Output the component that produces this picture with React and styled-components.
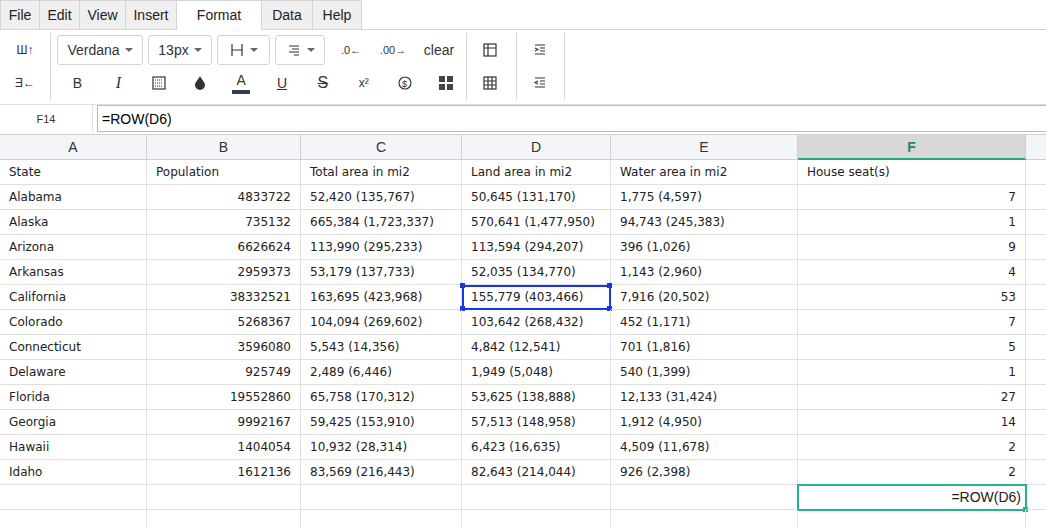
import React from 'react'
import styled, { createGlobalStyle } from 'styled-components'

const Global = createGlobalStyle`
  body { margin: 0; font-family: "Liberation Sans", Arial, sans-serif; background: #fff; overflow: hidden; }
`

const Menu = styled.div`
  display: flex;
  height: 30px;
  border-bottom: 1px solid #d4d4d4;
  box-sizing: border-box;
`
const Tab = styled.div`
  width: ${p => p.w}px;
  box-sizing: border-box;
  display: flex;
  align-items: center;
  justify-content: center;
  font-size: 14px;
  color: #222;
  background: ${p => (p.active ? '#fff' : '#efefef')};
  border: 1px solid #d4d4d4;
  border-left: none;
  border-bottom: ${p => (p.active ? '1px solid #fff' : 'none')};
  margin-bottom: ${p => (p.active ? '-1px' : '0')};
  &:first-child { border-left: 1px solid #d4d4d4; }
`
const Toolbar = styled.div`
  display: flex;
  height: 67px;
  padding-top: 3px;
  padding-bottom: 2px;
`
const Group = styled.div`
  width: ${p => p.w}px;
  box-sizing: border-box;
  border-right: 1px solid #d8d8d8;
  display: flex;
  flex-direction: column;
  justify-content: space-around;
  padding-left: ${p => p.pl || 0}px;
`
const Row = styled.div`
  display: flex;
  align-items: center;
  height: 32px;
`
const Drop = styled.div`
  width: ${p => p.w}px;
  height: 30px;
  margin-right: 5px;
  border: 1px solid #d4d4d4;
  border-radius: 3px;
  box-sizing: border-box;
  display: flex;
  align-items: center;
  justify-content: center;
  gap: 5px;
  font-size: 14px;
  color: #333;
  &::after { content: ''; border: 4px solid transparent; border-top: 4px solid #666; margin-top: 4px; }
`
const Ic = styled.div`
  width: ${p => p.w || 42}px;
  height: 30px;
  display: flex;
  align-items: center;
  justify-content: center;
  font-size: ${p => p.fs || 14}px;
  color: #333;
  font-family: ${p => (p.serif ? '"Liberation Serif", serif' : 'inherit')};
  font-style: ${p => (p.italic ? 'italic' : 'normal')};
`
const Formula = styled.div`
  display: flex;
  height: 27px;
  margin-top: 2px;
  border-top: 1px solid #e0e0e0;
`
const CellName = styled.div`
  width: 92px;
  font-size: 11px;
  color: #333;
  display: flex;
  align-items: center;
  justify-content: center;
  border-right: 1px solid #e0e0e0;
`
const Input = styled.div`
  flex: 1;
  margin-left: 4px;
  border: 1px solid #bbb;
  border-right: none;
  padding-left: 4px;
  display: flex;
  align-items: center;
  font-size: 14px;
`
const Grid = styled.div`
  display: grid;
  grid-template-columns: 147px 154px 161px 149px 187px 228px 40px;
  grid-auto-rows: 25px;
  margin-top: 2px;
  border-top: 1px solid #d0d0d0;
  font-family: Verdana, "DejaVu Sans", sans-serif;
  font-size: 12px;
`
const Head = styled.div`
  background: ${p => (p.sel ? '#d8d8d8' : '#f4f5f8')};
  border-right: 1px solid #d0d0d0;
  border-bottom: ${p => (p.sel ? '2px solid #23a97b' : '1px solid #d0d0d0')};
  color: ${p => (p.sel ? '#1a8a5a' : '#333')};
  font-weight: ${p => (p.sel ? 'bold' : 'normal')};
  font-family: "Liberation Sans", Arial, sans-serif;
  font-size: 14px;
  display: flex;
  align-items: center;
  justify-content: center;
  box-sizing: border-box;
`
const Cell = styled.div`
  border-right: 1px solid #e0e0e0;
  border-bottom: 1px solid #e0e0e0;
  box-sizing: border-box;
  display: flex;
  align-items: center;
  justify-content: ${p => (p.right ? 'flex-end' : 'flex-start')};
  padding: 0 9px;
  color: #222;
  white-space: nowrap;
  position: relative;
  ${p => p.blue && 'outline: 2px solid #1a36e0; outline-offset: -2px;'}
  ${p => p.green && 'outline: 2px solid #23b38f; outline-offset: -1px; font-family: "Liberation Sans", Arial, sans-serif; font-size: 14px; padding-right: 4px;'}
`
const Handle = styled.span`
  position: absolute;
  width: 5px;
  height: 5px;
  background: ${p => p.c};
  ${p => p.pos}
`

const data = [
  ['Alabama', '4833722', '52,420 (135,767)', '50,645 (131,170)', '1,775 (4,597)', '7'],
  ['Alaska', '735132', '665,384 (1,723,337)', '570,641 (1,477,950)', '94,743 (245,383)', '1'],
  ['Arizona', '6626624', '113,990 (295,233)', '113,594 (294,207)', '396 (1,026)', '9'],
  ['Arkansas', '2959373', '53,179 (137,733)', '52,035 (134,770)', '1,143 (2,960)', '4'],
  ['California', '38332521', '163,695 (423,968)', '155,779 (403,466)', '7,916 (20,502)', '53'],
  ['Colorado', '5268367', '104,094 (269,602)', '103,642 (268,432)', '452 (1,171)', '7'],
  ['Connecticut', '3596080', '5,543 (14,356)', '4,842 (12,541)', '701 (1,816)', '5'],
  ['Delaware', '925749', '2,489 (6,446)', '1,949 (5,048)', '540 (1,399)', '1'],
  ['Florida', '19552860', '65,758 (170,312)', '53,625 (138,888)', '12,133 (31,424)', '27'],
  ['Georgia', '9992167', '59,425 (153,910)', '57,513 (148,958)', '1,912 (4,950)', '14'],
  ['Hawaii', '1404054', '10,932 (28,314)', '6,423 (16,635)', '4,509 (11,678)', '2'],
  ['Idaho', '1612136', '83,569 (216,443)', '82,643 (214,044)', '926 (2,398)', '2'],
]

const Svg = ({ children }) => (
  <svg width="16" height="16" viewBox="0 0 16 16" fill="none" stroke="#333" strokeWidth="1.2">{children}</svg>
)

export default function App() {
  const tabs = [['File', 40], ['Edit', 40], ['View', 46], ['Insert', 51], ['Format', 85], ['Data', 51], ['Help', 49]]
  return (
    <>
      <Global />
      <Menu>
        {tabs.map(([t, w]) => <Tab key={t} w={w} active={t === 'Format'}>{t}</Tab>)}
      </Menu>
      <Toolbar>
        <Group w={51}>
          <Row><Ic w={51} fs={12}>Ш↑</Ic></Row>
          <Row><Ic w={51} fs={12}>Ǝ←</Ic></Row>
        </Group>
        <Group w={416} pl={6}>
          <Row>
            <Drop w={86}>Verdana</Drop>
            <Drop w={64}>13px</Drop>
            <Drop w={53}><Svg><path d="M3 2v12M13 2v12M3 8h10" /></Svg></Drop>
            <Drop w={50}><Svg><path d="M3 4h10M6 7h7M3 10h10M8 13h5" /></Svg></Drop>
            <Ic fs={11}>.0←</Ic>
            <Ic fs={11}>.00→</Ic>
            <Ic w={50}>clear</Ic>
          </Row>
          <Row>
            <Ic>B</Ic>
            <Ic serif italic fs={16}>I</Ic>
            <Ic><Svg><rect x="2" y="2" width="12" height="12" /><path d="M4 5h8M4 8h8M4 11h8" strokeDasharray="1 1" /></Svg></Ic>
            <Ic><svg width="12" height="14" viewBox="0 0 12 14"><path d="M6 0C4 4 1 6 1 9a5 5 0 0010 0C11 6 8 4 6 0z" fill="#333" /></svg></Ic>
            <Ic style={{ flexDirection: 'column' }}><span style={{ lineHeight: '14px' }}>A</span><span style={{ width: 18, height: 4, background: '#2c3e55', marginTop: 3 }} /></Ic>
            <Ic style={{ textDecoration: 'underline' }}>U</Ic>
            <Ic fs={16} style={{ textDecoration: 'line-through' }}>S</Ic>
            <Ic fs={12}>x²</Ic>
            <Ic><Svg><circle cx="8" cy="8" r="6" /><text x="5" y="11.5" fontSize="9" fill="#333" stroke="none">$</text></Svg></Ic>
            <Ic><svg width="14" height="14" viewBox="0 0 14 14"><rect x="0" y="0" width="6" height="6" fill="#444" /><rect x="8" y="0" width="6" height="6" fill="#444" /><rect x="0" y="8" width="6" height="6" fill="#444" /><rect x="8" y="8" width="6" height="6" fill="#444" /></svg></Ic>
          </Row>
        </Group>
        <Group w={50}>
          <Row><Ic w={46}><Svg><rect x="2" y="2" width="12" height="12" /><path d="M2 6h12M6 2v12" /></Svg></Ic></Row>
          <Row><Ic w={46}><Svg><rect x="2" y="2" width="12" height="12" /><path d="M2 6h12M2 10h12M6 2v12M10 2v12" /></Svg></Ic></Row>
        </Group>
        <Group w={48}>
          <Row><Ic w={46}><Svg><path d="M3 3h10M8 6h5M8 9h5M3 12h10M3 6l3 1.5L3 9" /></Svg></Ic></Row>
          <Row><Ic w={46}><Svg><path d="M3 3h10M8 6h5M8 9h5M3 12h10M6 6L3 7.5 6 9" /></Svg></Ic></Row>
        </Group>
      </Toolbar>
      <Formula>
        <CellName>F14</CellName>
        <Input>=ROW(D6)</Input>
      </Formula>
      <Grid>
        {['A', 'B', 'C', 'D', 'E', 'F', ''].map((h, i) => <Head key={i} sel={h === 'F'}>{h}</Head>)}
        {['State', 'Population', 'Total area in mi2', 'Land area in mi2', 'Water area in mi2', 'House seat(s)', ''].map((h, i) => <Cell key={i}>{h}</Cell>)}
        {data.map((r, ri) => (
          <React.Fragment key={ri}>
            {r.map((v, ci) => (
              <Cell key={ci} right={ci === 1 || ci === 5} blue={ri === 4 && ci === 3}>
                {v}
                {ri === 4 && ci === 3 && ['top:-2px;left:-2px', 'top:-2px;right:-2px', 'bottom:-2px;left:-2px', 'bottom:-2px;right:-2px'].map(p => <Handle key={p} c="#1a36e0" pos={p} />)}
              </Cell>
            ))}
            <Cell />
          </React.Fragment>
        ))}
        {[0, 1, 2, 3, 4].map(i => <Cell key={i} />)}
        <Cell right green>=ROW(D6)<Handle c="#23b38f" pos="bottom:-3px;right:-3px" /></Cell>
        <Cell />
        {[0, 1, 2, 3, 4, 5, 6].map(i => <Cell key={'e' + i} />)}
      </Grid>
    </>
  )
}
